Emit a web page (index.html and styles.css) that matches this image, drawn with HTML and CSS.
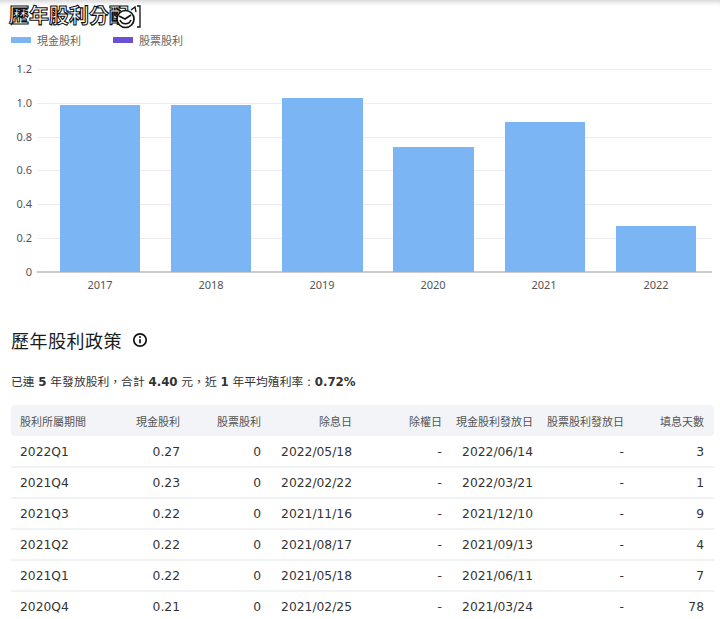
FILE: index.html
```html
<!DOCTYPE html>
<html lang="zh-Hant">
<head>
<meta charset="utf-8">
<title>歷年股利分配</title>
<link rel="stylesheet" href="styles.css">
</head>
<body>
<main class="page">
  <section class="chart-section">
    <div class="chart-title-wrap">
      <h2 class="chart-title">歷年股利分配</h2>
      <svg class="title-blob" viewBox="0 0 28 24" width="28" height="24" aria-hidden="true">
        <circle cx="9.500" cy="14" r="8.500" fill="#fff" stroke="#111" stroke-width="1.700"/>
        <path d="M3 11l6 3 6-4M4 15c2 5 9 5 11 0" fill="none" stroke="#111" stroke-width="1.600"/>
        <path d="M0 3l5 3M15 5l4-3 1 5M21 1h3v21h-3" fill="none" stroke="#111" stroke-width="1.300"/>
      </svg>
    </div>
    <ul class="legend">
      <li class="legend-item"><span class="swatch swatch-cash"></span>現金股利</li>
      <li class="legend-item"><span class="swatch swatch-stock"></span>股票股利</li>
    </ul>
    <svg class="chart" viewBox="0 0 720 250" width="720" height="250">
      <g class="grid">
        <line x1="37" x2="712" y1="19.500" y2="19.500"/>
        <line x1="37" x2="712" y1="53.500" y2="53.500"/>
        <line x1="37" x2="712" y1="87.500" y2="87.500"/>
        <line x1="37" x2="712" y1="120.500" y2="120.500"/>
        <line x1="37" x2="712" y1="154.500" y2="154.500"/>
        <line x1="37" x2="712" y1="188.500" y2="188.500"/>
      </g>
      <line class="axis" x1="37" x2="712" y1="222" y2="222"/>
      <g class="bars">
        <rect x="60" y="55" width="80" height="167"/>
        <rect x="171" y="55" width="80" height="167"/>
        <rect x="282" y="48" width="81" height="174"/>
        <rect x="393" y="97" width="81" height="125"/>
        <rect x="505" y="72" width="80" height="150"/>
        <rect x="616" y="176" width="80" height="46"/>
      </g>
      <g class="y-labels">
        <text x="32" y="23">1.2</text>
        <text x="32" y="57">1.0</text>
        <text x="32" y="91">0.8</text>
        <text x="32" y="124">0.6</text>
        <text x="32" y="158">0.4</text>
        <text x="32" y="192">0.2</text>
        <text x="32" y="226">0</text>
      </g>
      <g class="x-labels">
        <text x="100" y="239">2017</text>
        <text x="211" y="239">2018</text>
        <text x="322" y="239">2019</text>
        <text x="433" y="239">2020</text>
        <text x="544" y="239">2021</text>
        <text x="656" y="239">2022</text>
      </g>
    </svg>
  </section>

  <section class="policy">
    <h2 class="policy-title">歷年股利政策
      <svg class="info" viewBox="0 0 16 16" width="16" height="16" aria-hidden="true">
        <circle cx="8" cy="8" r="6.200" fill="none" stroke="#111" stroke-width="1.700"/>
        <path d="M8 7.200v4" stroke="#111" stroke-width="1.700" fill="none"/>
        <circle cx="8" cy="5" r="1" fill="#111"/>
      </svg>
    </h2>
    <p class="summary">已連 <b>5</b> 年發放股利，合計 <b>4.40</b> 元，近 <b>1</b> 年平均殖利率 : <b>0.72%</b></p>
    <table class="dividends">
      <colgroup>
        <col class="c1"><col class="c2"><col class="c3"><col class="c4"><col class="c5"><col class="c6"><col class="c7"><col class="c8">
      </colgroup>
      <thead>
        <tr><th class="left">股利所屬期間</th><th>現金股利</th><th>股票股利</th><th>除息日</th><th>除權日</th><th>現金股利發放日</th><th>股票股利發放日</th><th>填息天數</th></tr>
      </thead>
      <tbody>
        <tr><td class="left">2022Q1</td><td>0.27</td><td>0</td><td>2022/05/18</td><td>-</td><td>2022/06/14</td><td>-</td><td>3</td></tr>
        <tr><td class="left">2021Q4</td><td>0.23</td><td>0</td><td>2022/02/22</td><td>-</td><td>2022/03/21</td><td>-</td><td>1</td></tr>
        <tr><td class="left">2021Q3</td><td>0.22</td><td>0</td><td>2021/11/16</td><td>-</td><td>2021/12/10</td><td>-</td><td>9</td></tr>
        <tr><td class="left">2021Q2</td><td>0.22</td><td>0</td><td>2021/08/17</td><td>-</td><td>2021/09/13</td><td>-</td><td>4</td></tr>
        <tr><td class="left">2021Q1</td><td>0.22</td><td>0</td><td>2021/05/18</td><td>-</td><td>2021/06/11</td><td>-</td><td>7</td></tr>
        <tr><td class="left">2020Q4</td><td>0.21</td><td>0</td><td>2021/02/25</td><td>-</td><td>2021/03/24</td><td>-</td><td>78</td></tr>
      </tbody>
    </table>
  </section>
</main>
</body>
</html>
```
FILE: styles.css
```css
* { box-sizing: border-box; }
html, body { margin: 0; padding: 0; height: 619px; overflow: hidden; background: #fff; }
body {
  font-family: "DejaVu Sans", "Noto Sans CJK TC", sans-serif;
  color: #333;
  box-shadow: inset 0 6px 5px -4px rgba(0, 0, 0, .18);
}
.page { width: 720px; }

.chart-section { height: 300px; }
.chart-title-wrap { position: relative; height: 31px; padding: 2px 0 0 9px; }
.chart-title {
  margin: 0;
  font-size: 20px;
  line-height: 25px;
  font-weight: 700;
  font-family: "Noto Sans CJK TC", sans-serif;
  color: #fff;
  -webkit-text-stroke: 1.1px #111;
  white-space: nowrap;
}
.title-blob { position: absolute; left: 116px; top: 5px; }

.legend { list-style: none; margin: 0 0 2px; padding: 0 0 0 11px; display: flex; gap: 32px; height: 17px; align-items: center; }
.legend-item { display: flex; align-items: center; gap: 6px; font: 11px/14px "Noto Sans CJK TC", sans-serif; color: #666; width: 70px; }
.swatch { width: 20px; height: 6px; display: block; }
.swatch-cash { background: #7cb5f2; }
.swatch-stock { background: #6a50d3; }

.chart { display: block; }
.grid line { stroke: #ececec; stroke-width: 1; }
.axis { stroke: #ccc; stroke-width: 2; }
.bars rect { fill: #7cb5f3; }
.y-labels text, .x-labels text { font: 11px "Noto Sans", sans-serif; fill: #555; }
.y-labels text { text-anchor: end; }
.x-labels text { text-anchor: middle; }

.policy { padding: 0 6px 0 11px; }
.policy-title {
  margin: 28px 0 0;
  height: 24px;
  display: flex;
  align-items: center;
  gap: 10px;
  font: 400 18px/24px "Noto Sans CJK TC", sans-serif;
  letter-spacing: .5px;
  color: #1b1b1b;
}
.summary { margin: 21px 0 0; height: 18px; font-size: 11.800px; line-height: 18px; color: #333; }
.summary b { font-weight: 700; }

.dividends { margin-top: 14px; width: 703px; table-layout: fixed; border-collapse: separate; border-spacing: 0; }
.c1 { width: 100px; } .c2 { width: 79px; } .c3 { width: 81px; } .c4 { width: 91px; }
.c5 { width: 90px; } .c6 { width: 91px; } .c7 { width: 91px; } .c8 { width: 80px; }
.dividends th, .dividends td { text-align: right; padding: 0 10px 0 0; white-space: nowrap; }
.dividends th.left, .dividends td.left { text-align: left; padding: 0 0 0 9px; }
.dividends th { height: 32px; background: #f2f4f7; background-clip: padding-box; border-bottom: 1px solid transparent; font: 400 11px/14px "Noto Sans CJK TC", sans-serif; color: #555; }
.dividends th:first-child { border-top-left-radius: 4px; border-bottom-left-radius: 4px; }
.dividends th:last-child { border-top-right-radius: 4px; border-bottom-right-radius: 4px; }
.dividends td { height: 31px; font-size: 12.300px; line-height: 16px; color: #333; border-bottom: 2px solid #f1f2f4; }
```
